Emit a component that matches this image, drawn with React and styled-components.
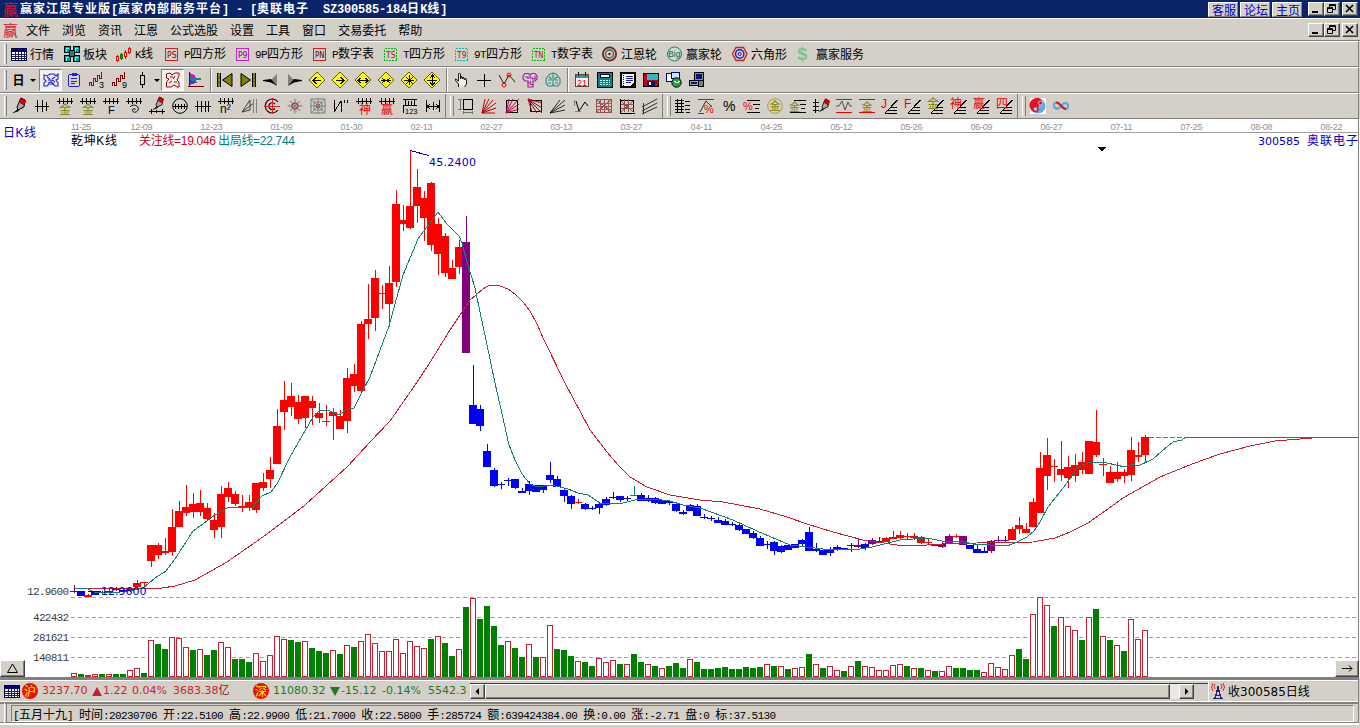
import React from "react";
import styled, { createGlobalStyle, css } from "styled-components";

const menus = ["文件", "浏览", "资讯", "江恩", "公式选股", "设置", "工具", "窗口", "交易委托", "帮助"];

// [icon, label, item width]
const mainTools = [
  ["sheet", "行情", 53],
  ["blocks", "板块", 52],
  ["kline", "K线", 49],
  ["ps", "P四方形", 71],
  ["p9", "9P四方形", 77],
  ["pn", "P数字表", 71],
  ["ts", "T四方形", 71],
  ["t9", "9T四方形", 77],
  ["tn", "T数字表", 70],
  ["wheel", "江恩轮", 65],
  ["big", "赢家轮", 65],
  ["hexagon", "六角形", 65],
  ["dollar", "赢家服务", 70],
];

const navTools = ["first", "last", "left", "right", "dLeft", "dRight", "dWide", "dShrink", "dCross", "dVert"];
const pointTools = ["hand", "plus", "angle", "brainPurple", "brainTeal"];
const utilTools = ["calendar", "calc", "book", "disk", "network", "computer"];

const drawTools = [
  "pencil", "comb3", "combGold", "combGold", "combF", "combSpiral", "pencilRuler", "circleRuler", "comb4",
  "combN2", "fanGrey", "target", "starTeal", "webTeal", "zig", "combShen", "combYing", "ruler123", "span",
];
const fanTools = ["square", "fanRed", "fanBox", "fanDown", "fan", "vee", "grid", "gridBlack", "channel"];
const levelTools = [
  "levels", "percentLine", "percent", "percentLevels", "goldCircle", "goldLevels", "penLevels", "wave",
  "goldLines", "fanJ", "fanF", "fanGold", "fanShen", "fanYing", "fanSi",
];

const dates = [
  "12-09", "12-23", "01-09", "01-30", "02-13", "02-27", "03-13", "03-27", "04-11", "04-25",
  "05-12", "05-26", "06-09", "06-27", "07-11", "07-25", "08-08", "08-22",
];

// colour, high, body top, body bottom, low
const candles = `
p 585 591 592 593|b 591 591 596 596|r 594 595 597 597|b 591 592 595 595|b 591 592 593 594|p 589 591 592 592|
p 587 589 590 591|b 588 590 592 592|p 587 589 591 592|r 580 583 587 588|r 582 582 583 586|r 545 545 561 567|
r 543 545 555 559|r 538 551 553 555|r 509 527 552 556|r 501 511 527 527|r 485 507 513 516|r 493 504 512 518|
r 490 503 512 516|r 503 508 519 521|r 513 520 530 538|r 486 494 527 538|r 482 488 497 502|r 491 494 504 506|
r 495 506 507 512|r 495 502 507 511|r 483 483 510 513|r 473 482 488 491|r 457 470 479 488|r 409 426 464 464|
r 381 400 412 430|r 383 396 407 416|r 395 402 419 424|r 396 396 418 428|r 396 401 408 425|r 403 413 418 423|
r 405 421 422 426|r 408 412 416 440|r 410 416 429 429|r 368 378 421 433|r 364 374 386 392|r 321 324 391 392|
r 284 319 324 339|r 270 278 318 331|r 285 293 294 309|r 266 283 304 327|r 190 204 282 287|r 205 220 224 231|
r 150 206 228 229|r 169 187 206 223|r 191 198 218 241|r 182 183 245 251|r 218 224 254 275|r 233 236 273 277|
r 260 268 279 279|r 240 247 267 274|p 216 242 353 353|b 365 405 424 424|b 405 409 426 431|b 444 451 467 467|
b 468 470 486 487|b 482 484 485 489|b 478 480 481 486|b 479 479 488 489|b 488 491 493 493|b 481 484 491 495|
b 485 485 492 492|b 485 485 490 493|b 462 475 480 483|b 476 479 487 487|b 489 490 496 502|b 495 496 504 509|
r 499 502 503 504|b 503 504 509 510|b 506 508 509 510|b 503 504 508 514|b 497 499 505 506|b 492 497 498 499|
b 496 496 500 502|b 496 498 499 501|t 486 495 496 496|b 493 495 501 501|b 495 498 501 502|b 497 498 503 504|
b 500 500 504 504|b 500 501 503 505|b 504 504 511 512|b 510 512 514 515|b 504 505 511 511|b 504 506 516 516|
b 514 517 518 519|b 516 518 519 521|b 517 520 523 523|b 519 521 525 525|b 522 524 525 526|b 524 525 530 531|
b 529 529 534 534|b 531 533 538 539|b 536 538 546 546|b 541 544 545 549|b 541 542 551 555|b 545 546 552 553|
b 545 545 550 550|b 544 544 548 548|b 539 540 544 547|b 527 532 551 551|b 543 549 551 552|b 550 550 555 555|
b 547 549 553 556|b 545 547 549 551|b 548 548 549 549|b 543 545 546 552|p 539 545 547 548|b 543 544 548 550|
p 538 540 544 545|p 537 541 543 543|r 537 538 542 542|r 531 537 539 539|r 531 535 538 539|r 533 536 537 540|
r 533 536 538 540|r 536 537 543 544|r 539 542 543 544|p 544 544 546 546|p 542 544 547 548|p 534 536 544 544|
r 534 536 537 538|p 536 536 545 545|b 545 545 549 549|b 545 549 553 553|b 547 551 553 553|p 540 541 551 553|
p 536 540 541 542|p 536 540 541 542|r 527 529 540 540|r 517 525 529 534|r 523 529 533 533|r 498 502 527 527|
r 452 468 513 513|r 438 455 476 490|r 459 466 467 482|r 441 469 475 481|r 456 467 478 488|r 454 465 476 482|
r 452 462 470 474|r 441 441 474 474|r 410 442 455 457|r 458 464 465 476|r 466 472 483 483|r 462 472 479 482|
r 469 472 476 483|r 437 450 475 481|r 442 455 457 462|r 435 437 455 462`
  .split("|")
  .map((row) => {
    const [c, ...v] = row.trim().split(" ");
    return [c, ...v.map(Number)];
  });

const candleColors = { r: "#ff0000", b: "#0000ff", p: "#800080", t: "#008080" };

// r = rising day, g = falling day, followed by the top of the bar
const volumes = `
r673 g674 r675 r674 g674 r674 g674 g674 r670 r668 g673 r640 g644 g649 r637 r638 r647 g650 r649 g655 g650 r642
r647 g659 g659 g662 r653 r661 r655 r636 r639 g640 g642 r641 g648 g651 g653 r650 g654 r645 g647 r641 r634 r643
r651 r651 r639 r653 r641 r646 r648 g639 r636 g643 g656 r649 g607 r598 g619 g606 g626 g645 r641 g648 g657 r644
g657 r657 r625 g649 g650 g656 r661 g662 g666 r658 r662 r660 g664 r664 g654 g662 r664 g666 r668 g666 g663 g668
r659 g662 g669 g669 g668 g667 g669 g669 g667 g668 g667 r664 g666 r666 g669 r668 r667 g654 r664 g668 r666 r670
g671 r666 g661 r666 r667 r670 r670 r665 r664 g666 r668 g668 r670 g671 r671 r666 g668 g668 g670 g670 r672 r663
r667 r669 r655 g649 g659 r614 r597 r605 g626 r617 r626 r630 g640 r617 g609 r636 g640 r645 g651 r619 r639 r630`
  .trim()
  .split(/\s+/);

const shortLine =
  "75,588 88,589 94,592 120,592 134,590 143,588 155,578 166,571 175,559 193,531 207,521 215,515 227,508 252,507 262,496 271,492 277,484 290,457 313,417 319,411 327,410 340,415 345,410 354,408 363,390 370,377 383,342 389,326 403,275 418,239 430,223 438,212 447,224 459,236 462,243 467,262 475,288 480,312 486,340 495,383 503,418 509,445 515,460 522,474 530,484 537,487 550,485 560,487 568,489 578,493 588,495 600,503 623,503 635,500 653,499 670,501 683,505 700,508 733,520 757,531 790,545 798,546 823,549 860,549 872,547 900,540 927,538 947,542 960,541 973,544 1007,546 1017,542 1027,537 1034,531 1040,522 1048,507 1067,483 1077,468 1090,462 1107,463 1125,467 1132,464 1138,466 1153,459 1162,451 1173,442 1182,440 1186,437 1358,437";
const longLine =
  "75,588 162,588 175,586 195,580 227,562 260,539 283,522 305,505 347,467 370,442 390,421 413,388 429,364 450,330 470,300 483,289 488,286 493,285 500,286 508,289 515,294 523,302 530,311 537,324 544,340 565,383 590,430 607,452 618,465 630,477 647,487 670,495 700,500 723,502 760,509 787,517 807,524 833,532 863,540 877,542 897,545 927,545 943,544 977,543 1033,542 1055,538 1070,532 1088,523 1105,511 1123,498 1160,477 1187,466 1203,460 1220,454 1250,446 1275,441 1300,439 1325,437";

const K = "#000";
const R = "#f00000";
const line = (d, stroke = K, extra = {}) => <path d={d} stroke={stroke} fill="none" {...extra} />;
const glyph = (t, x, y, fill, size = 9) => (
  <text x={x} y={y} fill={fill} fontSize={size} fontFamily='"Liberation Sans", "Noto Sans CJK SC", sans-serif'>{t}</text>
);
const soft = { shapeRendering: "auto" };

const badge = (t, box, ink, dash) => (
  <>
    <rect x="0.5" y="2.5" width="12" height="12" fill="none" stroke={box} strokeWidth="1.2" strokeDasharray={dash} />
    <text x="2" y="11.5" fill={ink} fontSize="8" textLength="9.5" lengthAdjust="spacingAndGlyphs" fontFamily='"DejaVu Sans", sans-serif'>{t}</text>
  </>
);
const comb = line("M0 3.5H16M2.5 0V6M6.5 0V6M10.5 0V6M14.5 0V6");
const fanLines = line("M3 15L15.5 2M3 15.5H15M5 12.5H15M8 9.5H15", K, { strokeWidth: 1 });
const diamond = (d) => (
  <>
    <path d="M8 0L16 8L8 16L0 8Z" fill="#ffff00" stroke="#606000" {...soft} />
    {line(d)}
  </>
);
const penHead = (
  <g {...soft}>
    <path d="M10 0L14 2L13 9L7 12L6 9Z" fill="#a8a8a8" stroke="#000" />
    <path d="M10 0L15 3L13 7L8 4Z" fill="#e00000" stroke="#600000" strokeWidth="0.6" />
    <path d="M1 15.5L7 11L8 13Z" fill="#000" />
  </g>
);
const fanGlyph = (t, color) => (
  <>
    {fanLines}
    {glyph(t, -1, 10, color, 12)}
  </>
);

const icons = {
  sheet: (
    <>
      <rect x="0.5" y="2.5" width="15" height="12" fill="#fff" stroke="#000040" />
      <rect x="1" y="3" width="14" height="3" fill="#000080" />
      {line("M1 8.5H15M1 10.5H15M1 12.5H15M4.5 6V14M7.5 6V14M10.5 6V14M13 6V14", "#202060")}
    </>
  ),
  blocks: (
    <>
      {[[1, 1], [10, 1], [1, 10], [10, 10]].map(([x, y]) => (
        <g key={x + "-" + y}>
          <rect x={x - 0.5} y={y - 0.5} width="6" height="6" fill="#00a0a0" stroke="#000" />
          {line(`M${x + 1} ${y + 1.5}H${x + 4}M${x + 1.5} ${y + 1}V${y + 5}`, "#40ffff")}
        </g>
      ))}
      <rect x="5.5" y="4.5" width="5" height="6" fill="#208080" stroke="#000" />
    </>
  ),
  kline: (
    <>
      {line("M1.5 9V16M5.5 7V14M9.5 4V13M13.5 1V8", R)}
      <path d="M0.5 10.5H2.5V14.5H0.5ZM8.5 6.5H10.5V10.5H8.5ZM12.5 2.5H14.5V6.5H12.5Z" fill="#fff" stroke={R} />
      <path d="M4.5 8.5H6.5V12.5H4.5Z" fill="#00a000" stroke="#008000" />
    </>
  ),
  ps: badge("PS", "#d02020", "#800000"),
  p9: badge("P9", "#d020d0", "#800080"),
  pn: badge("PN", "#d02020", "#500000"),
  ts: badge("TS", "#00c000", "#a02020", "2 1"),
  t9: badge("T9", "#00c0c0", "#a02020", "2 1"),
  tn: badge("TN", "#00c000", "#a02020", "2 1"),
  wheel: (
    <g fill="none" {...soft}>
      <circle cx="7.5" cy="8" r="6.6" stroke="#702020" strokeWidth="1.8" />
      <circle cx="7.5" cy="8" r="4" stroke="#207050" strokeWidth="1.4" />
      <circle cx="7.5" cy="8" r="1.3" fill="#702020" />
    </g>
  ),
  big: (
    <g {...soft}>
      <circle cx="7.5" cy="8" r="7" fill="#c0e0d0" stroke="#407060" />
      {glyph("Big", 1.2, 11, "#206050", 8.5)}
    </g>
  ),
  hexagon: (
    <g fill="none" {...soft}>
      <path d="M4 1.5H11.5L15 8L11.5 14.5H4L0.5 8Z" stroke="#c02020" strokeWidth="1.3" />
      <circle cx="7.7" cy="8" r="4.2" stroke="#2020c0" strokeWidth="1.4" />
      <circle cx="7.7" cy="8" r="1.5" stroke="#2020c0" />
    </g>
  ),
  dollar: (
    <g fontWeight="bold" {...soft}>
      {line("M5.5 0V16", "#90c090")}
      {glyph("S", 0, 14, "#80c090", 16)}
    </g>
  ),
  blueFace: (
    <g stroke="#2020e0" fill="none" strokeWidth="1.1" {...soft}>
      <path d="M1 3L4 4L7 2H11L13 4L15 2V7L13 8L15 11V14H12L10 12H6L4 14H1V11L3 9L1 7ZM4 5L7 7M12 5L9 7M5 8H8V10M9 8L12 10M5 11L8 10L11 12" />
    </g>
  ),
  clipboard: (
    <g stroke="#2020e0" fill="none">
      <rect x="2.5" y="2.5" width="11" height="12" rx="2" />
      <path d="M6 2.5V1.5H10.500V3.500H6M5 6.5H11M5 9.5H11M5 11.5H9" />
    </g>
  ),
  wave3: (
    <>
      {line("M0.5 14V10H2.5V13H4.5V6H6.5V9H8.5V3H10.5V6H12.5V0", "#800080")}
      {glyph("3", 10, 16, K, 9)}
    </>
  ),
  wave9: (
    <>
      {line("M0.5 14V10H2.5V13H4.5V6H6.5V9H8.5V3H10.5V6H12.5V0", "#800000")}
      {glyph("9", 10, 16, K, 9)}
    </>
  ),
  bar: line("M7.5 0V3M5.5 3.5H9.5V12.5H5.5ZM7.5 13V16"),
  redFace: line("M1.5 2V6L4 7L1.5 10V15H6L9 13L12 15H14V10L12 8L14 4V1H10L7 3L5 1ZM5 5H8M10 4L8 7M9 10H12M4 11L7 9", "#a00000", soft),
  flag: (
    <>
      <path d="M2 1L8 4L2 7Z" fill="#e000e0" />
      <path d="M2 4L15 7L2 10Z" fill="#208080" />
      <path d="M2 8L10 10L2 13Z" fill="#4040c0" />
      {line("M1.5 0V15M0 14.5H16", "#800000")}
    </>
  ),
  first: (
    <>
      {line("M0.5 1V15M3.5 1V15")}
      {line("M2 1V15", "#808000", { strokeWidth: 2 })}
      <path d="M15 1.5V14.5L5.5 8Z" fill="#808000" stroke="#000" {...soft} />
    </>
  ),
  last: (
    <>
      {line("M12.5 1V15M15.5 1V15")}
      {line("M14 1V15", "#808000", { strokeWidth: 2 })}
      <path d="M1 1.5V14.5L10.5 8Z" fill="#808000" stroke="#000" {...soft} />
    </>
  ),
  left: (
    <g {...soft}>
      <path d="M14 2V14L8 8Z" fill="#808080" />
      <path d="M0 8L8 7L14 14L8 10.500L0 9Z" />
    </g>
  ),
  right: (
    <g {...soft}>
      <path d="M2 2V14L8 8Z" fill="#808080" />
      <path d="M16 8L8 7L2 14L8 10.500L16 9Z" />
    </g>
  ),
  dLeft: diamond("M4 8.5H12M7.500 5L4 8.5L7.500 12"),
  dRight: diamond("M4 8.5H12M8.500 5L12 8.5L8.500 12"),
  dWide: diamond("M3 8.5H13M5.500 6L3 8.5L5.500 11M10.500 6L13 8.5L10.500 11"),
  dShrink: diamond("M3 8.5H13M4 6L7 8.5L4 11M12 6L9 8.5L12 11"),
  dCross: diamond("M3 8.5H13M8.5 3V13M5 5L12 12M12 5L5 12"),
  dVert: diamond("M3 8.5H13M8.5 3V13M6 6L8.5 3L11 6M6 10.500L8.5 13L11 10.500"),
  hand: <path d="M5.5 15V12L2.5 8.5V7L5.5 9V2L6.5 1L7.5 2V7L8.5 4L9.5 7L10.5 5L11.5 8L12.5 6L13.5 8V12L11.5 15" fill="#f0f0f0" stroke="#000" strokeWidth="0.9" {...soft} />,
  plus: line("M1 8.5H15M8.5 2V15"),
  angle: (
    <g {...soft}>
      {line("M0 3L5 12L10 3L16 10", "#202020")}
      <circle cx="5" cy="13" r="2" fill="none" stroke={R} />
      <circle cx="10" cy="3" r="2" fill="none" stroke={R} />
    </g>
  ),
  brainPurple: (
    <g stroke="#a020a0" fill="none" strokeWidth="1.2" {...soft}>
      <path d="M3 1.500H6L8 2.500L10 1.500H13L15 4V7L13 9H11V15H6V9H3L1 7V4ZM3 5H6V7M8 2.500V6H11M13 4V7H10M6 11H8.500V9M8 12.500H11" />
    </g>
  ),
  brainTeal: (
    <g stroke="#209090" fill="none" strokeWidth="1.1" {...soft}>
      <path d="M5 2L8 1L11 2L13 4L15 7V11L13 14H9L8 12L7 14H3L1 11V7L3 4ZM8 1V12M4 5L6 6V8H3M3 11H6M13 5L10 6V8H13M10 11H13" />
    </g>
  ),
  calendar: (
    <>
      <rect x="1.5" y="2.5" width="13" height="12" fill="#fff0f0" stroke="#604040" />
      <rect x="2" y="3" width="12" height="3" fill="#20a0a0" />
      {line("M4.5 0V4M11.5 0V4")}
      {glyph("21", 3, 14, "#e00000", 9)}
    </>
  ),
  calc: (
    <>
      <rect x="0.5" y="0.5" width="15" height="15" fill="#108080" stroke="#000" />
      <rect x="3.5" y="2.5" width="9" height="3" fill="#fff" stroke="#000040" />
      {line("M3 8.5H13M3 10.5H13M3 12.5H13", "#c0ffff", { strokeDasharray: "2 1" })}
    </>
  ),
  book: (
    <>
      <rect x="1" y="1" width="14" height="14" fill="#fff" stroke="#000" strokeWidth="1.4" />
      {line("M3.5 1V15", K, { strokeDasharray: "1 1" })}
      {line("M6 4.5H13M6 6.5H13M6 8.5H13M6 10.5H11", "#2020c0")}
      <path d="M15 9V15H9Z" />
    </>
  ),
  disk: (
    <>
      <rect x="0.5" y="1.5" width="15" height="13" fill="#c00020" stroke="#000" />
      <rect x="4" y="2" width="11" height="6" fill="#20c0c0" />
      <path d="M4 9H12V14H4Z" fill="#101060" />
      <path d="M6 10H8V13H6Z" fill="#fff" />
    </>
  ),
  network: (
    <g>
      <rect x="0.5" y="1.5" width="8" height="8" fill="#fff" stroke="#000080" />
      <rect x="5.5" y="0.5" width="8" height="6" fill="#d0e0ff" stroke="#000080" />
      <circle cx="10.5" cy="10.5" r="4.7" fill="#20a060" stroke="#000" {...soft} />
      {line("M8 9L11 11L14 9", "#ffff60")}
    </g>
  ),
  computer: (
    <>
      <rect x="5.5" y="0.5" width="9" height="8" fill="#909090" stroke="#000" />
      <rect x="7" y="2" width="6" height="5" fill="#101080" />
      <rect x="0.5" y="8.5" width="9" height="5" fill="#a0a0c0" stroke="#000" />
      <rect x="9.5" y="8.5" width="5" height="6" fill="#808080" stroke="#000" />
      <path d="M2 10H8V12H2Z" fill="#101080" />
    </>
  ),
  pencil: penHead,
  comb3: line("M1 8.5H15M3.5 2V14M8.5 2V14M12.5 4V13"),
  combGold: <>{comb}{glyph("金", 2, 16, "#808000", 12)}</>,
  combF: <>{comb}{glyph("F", 5, 15.5, K, 11)}</>,
  combSpiral: <>{comb}{line("M4 9C7 5 14 8 12 12C10 16 5 14 7 11C8 10 10 11 9 12", K, soft)}</>,
  pencilRuler: <>{<g transform="translate(2 -1) scale(.85)">{penHead}</g>}{line("M0 13.5H16M2.5 11V16M13.5 11V16M7.5 12V15")}</>,
  circleRuler: (
    <>
      <circle cx="8" cy="8" r="7.3" fill="none" stroke="#000" {...soft} />
      {line("M1 8.5H15M3.5 6V11M6.5 6V11M9.5 6V11M12.5 6V11")}
    </>
  ),
  comb4: line("M0 8.5H16M2.5 3V14M6.5 3V14M10.5 3V14M13.5 3V14"),
  combN2: <>{comb}{glyph("n²", 2, 15, K, 12)}</>,
  fanGrey: <>{line("M1 14L9 2V12ZM1 14L13 5", "#404040", soft)}{line("M12.5 1V15M15.5 1V15", "#808080")}</>,
  target: (
    <>
      <path d="M14 4A7 7 0 1 0 14 12M11 6A3.500 3.500 0 1 0 11 10.500" fill="none" stroke="#400000" strokeWidth="1.2" {...soft} />
      {line("M8.5 0V16M0 8.5H16", "#e02020")}
    </>
  ),
  starTeal: (
    <g {...soft}>
      {line("M8 0.500V15.500M0.500 8H15.500M3 3L13 13M13 3L3 13", "#609090")}
      <circle cx="8" cy="8" r="3" fill="none" stroke="#c04040" strokeWidth="1.4" />
      <circle cx="8" cy="8" r="5.5" fill="none" stroke="#709090" strokeDasharray="1 2" />
    </g>
  ),
  webTeal: (
    <g {...soft}>
      <path d="M1 1H15V15H1ZM4 4H12V12H4Z" fill="none" stroke="#708080" />
      {line("M8 0V16M0 8H16M1 1L15 15M15 1L1 15", "#708080", { strokeWidth: 0.8 })}
      <circle cx="8" cy="8" r="2" fill="none" stroke="#b04040" />
    </g>
  ),
  zig: line("M1.5 2V14M1 14L8 3M8.5 3V14M11.5 2V5M14.5 2V5"),
  combShen: <>{comb}{glyph("神", 3, 16, R, 12)}</>,
  combYing: <>{comb}{glyph("赢", 2, 16, R, 12)}</>,
  ruler123: <>{line("M1 1.5H15M1 7.5H15M3.5 1V8M6.5 3V7M9.5 3V7M12.5 1V8M1.5 8V15")}{glyph("123", 3, 15.5, K, 7.5)}</>,
  span: line("M1.5 2V14M14.5 2V14M1 8.5H15M5 6L2 8.5L5 11M11 6L14 8.5L11 11M8.5 4V12"),
  square: <>{line("M5.5 1.5H14.5V11.5H5.5Z")}{line("M0 1.5H4M2.5 2V12M0 11.5H4M5.5 13V16M14.5 13V16M6 14.500H14", "#707070")}</>,
  fanRed: line("M1 15L4 1M1 15L8 1M1 15L12 2M1 15L15 5M1 15L15 10M1 15H14", "#c00000", soft),
  fanBox: <><rect x="2.5" y="2.5" width="11" height="12" fill="none" stroke="#000" />{line("M2 15L5 1M2 15L9 1M2 15L15 1M2 15L15 6M2 15L15 11", "#b00050", soft)}</>,
  fanDown: <><rect x="3.5" y="2.5" width="11" height="11" fill="none" stroke="#000" />{line("M1 1L15 5M1 1L15 10M1 1L15 15M1 1L10 15M1 1L5 14", "#b00020", soft)}</>,
  fan: line("M0 15L15 2M0 15L15 7M0 15L15 12M0 15L10 2", K, { ...soft, strokeWidth: 0.8 }),
  vee: <>{line("M3 3L6 13L12 4L15 8", K, soft)}{line("M1.5 2V8M2 13.5H8", "#808080")}</>,
  grid: <>{line("M0.5 1.5H15.5V14.5H0.5ZM0 8.5H16M8.5 1V15M1 2L15 14M15 2L1 14", "#905050")}{line("M4.5 1V15M12.5 1V15M0 5.5H16M0 11.5H16", "#a06060")}</>,
  gridBlack: <>{line("M1.5 1V15H16M2 2.5H15M14.5 2V14")}{line("M5.5 1V14M9.5 1V14M2 6.5H15M2 10.5H15M2 3L14 14M14 3L2 14", "#905050")}</>,
  channel: line("M0 9L15 1M0 13L15 5M0 16L15 9M1.5 5V16", "#303030", soft),
  levels: line("M2.5 1V15M6.5 1V15M0 2.5H9M0 5.5H9M0 8.5H9M0 11.5H9M0 14.5H9M10 3.5H15M10 7.5H15M10 11.5H15M11 14.5H15"),
  percentLine: <>{line("M0 1.5H16M0 15.5H6", R)}{line("M2 14L8 3L14 9", "#303030", soft)}{glyph("%", 6, 15, R, 11)}</>,
  percent: glyph("%", 2, 13, K, 14),
  percentLevels: <>{line("M3 2.5H16M9 6.5H16M11 10.5H15M3 14.5H16")}{glyph("%", -1, 12, R, 11)}</>,
  goldCircle: <g {...soft}><circle cx="8" cy="8" r="7.3" fill="none" stroke="#a0a040" />{glyph("金", 2.5, 12, "#808000", 11)}</g>,
  goldLevels: <>{line("M4 2.5H16M10 6.5H16M11 10.5H15M0 14.5H16")}{glyph("金", -1, 13, "#808000", 11)}</>,
  penLevels: <>{line("M2.5 1V15M0 4.5H6M0 8.5H6M0 12.5H6")}<g transform="translate(4 1) scale(.85)">{penHead}</g></>,
  wave: <>{line("M0 1.5H16M0 14.5H16", R)}{line("M0 8H3L6 3L9 12L12 4L14 8H16", "#505050", soft)}</>,
  goldLines: <>{line("M0 1.5H16M0 14.5H16", R)}{glyph("金", 2.5, 12.500, "#808000", 11)}</>,
  fanJ: fanGlyph("J", R),
  fanF: fanGlyph("F", R),
  fanGold: fanGlyph("金", "#808000"),
  fanShen: fanGlyph("神", R),
  fanYing: fanGlyph("赢", R),
  fanSi: fanGlyph("四", R),
  taiji: (
    <g {...soft}>
      <rect width="16" height="16" fill="#fff" />
      <circle cx="8" cy="8" r="7.5" fill="#60a8f0" />
      <path d="M10.500 0.700A7.500 7.500 0 1 0 3.500 14C5 15 10 14 8.500 10C7 7 12 6 12 3Z" fill="#e81020" />
      <circle cx="10.5" cy="5" r="2" fill="#e81020" stroke="#c0d8f8" strokeWidth="0.8" />
      <circle cx="5.5" cy="11" r="1.8" fill="#a0c8f8" />
    </g>
  ),
  infinity: (
    <g fill="none" strokeWidth="2.2" {...soft}>
      <path d="M8 8C4 2 0 5 1 8C2 12 6 11 8 8C12 3 15 5 15 8C15 12 11 12 8 8" stroke="#60a8d8" />
      <path d="M3 4.5C7 4 8 10 13 11.2" stroke="#d01030" />
    </g>
  ),
  tower: (
    <>
      <path d="M5 15.5L8 4L11 15.5M3 15.5H13M6 12.5H10M7 8.5H9" fill="none" stroke="#202080" strokeWidth="1.5" />
      <path d="M5 1Q3 3.5 5 6M11 1Q13 3.5 11 6M3 0Q0 4 3 8M13 0Q16 4 13 8" fill="none" stroke="#e02020" {...soft} />
    </>
  ),
};

function Icon({ name }) {
  return <IconSvg viewBox="0 0 16 16">{icons[name]}</IconSvg>;
}

// latin runs are half the width of a chinese character
function Mixed({ children }) {
  return children.split(/([\x20-\x7e]+)/).map((run, i) => (i % 2 ? <Latin key={i}>{run}</Latin> : run));
}

function IconCells({ names }) {
  return names.map((name, i) => (
    <Cell key={i}>
      <Icon name={name} />
    </Cell>
  ));
}

function WindowButtons() {
  return (
    <WindowBtnGroup>
      <WindowBtn><svg width="11" height="10"><path d="M2 8H8" stroke="#000" strokeWidth="2" /></svg></WindowBtn>
      <WindowBtn><svg width="11" height="10"><path d="M3.5 3V0.5H9.5V5.5H7M1.5 3.5H6.5V8.5H1.5ZM3 1.5H10M1 4.5H7" fill="none" stroke="#000" /></svg></WindowBtn>
      <WindowBtn $gap><svg width="11" height="10"><path d="M2 1L9 8M9 1L2 8" stroke="#000" strokeWidth="1.7" /></svg></WindowBtn>
    </WindowBtnGroup>
  );
}

function Chart() {
  return (
    <ChartSvg viewBox="0 119 1360 558">
      <path d="M71 132.5H1358" stroke="#a0a0a0" />
      <g fill="#909090" fontSize="9" fontFamily='"Liberation Sans", sans-serif'>
        <text x="71" y="130" textLength="20">11-25</text>
        {dates.map((d, i) => (
          <text key={d} x={130.5 + i * 70} y="130" textLength="22">{d}</text>
        ))}
      </g>
      <ChartText x="3" y="137" fill="#0000c8" textLength="33">日K线</ChartText>
      <ChartText x="71" y="145" fill="#000" textLength="46">乾坤K线</ChartText>
      <ChartText x="139" y="145" fill="#d00020" textLength="77">关注线=19.046</ChartText>
      <ChartText x="218" y="145" fill="#008080" textLength="77">出局线=22.744</ChartText>
      <ChartText x="1307" y="145" fill="#0000c8" textLength="51">奥联电子</ChartText>
      <WideText x="1258" y="145" fill="#0000c8">300585</WideText>
      <path d="M1098 147H1106L1102 151.5Z" />

      <g fill="#404040" fontSize="11" fontFamily='"Liberation Mono", monospace'>
        <text x="27" y="595" textLength="42">12.9600</text>
        <text x="33" y="621" textLength="36">422432</text>
        <text x="33" y="641" textLength="36">281621</text>
        <text x="33" y="661" textLength="36">140811</text>
      </g>
      <path d="M71 597.5H1358M71 617.5H1358M71 637.5H1358M71 657.5H1358" stroke="#a0a0a0" strokeDasharray="4 3" />

      {volumes.map((v, i) => {
        const top = Number(v.slice(1));
        return v[0] === "r" ? (
          <rect key={i} x={71.5 + i * 7} y={top + 0.5} width="5" height={676 - top} fill="#fff" stroke="#c81e32" />
        ) : (
          <rect key={i} x={71 + i * 7} y={top} width="6" height={677 - top} fill="#008000" />
        );
      })}

      {candles.map(([c, high, top, bottom, low], i) => (
        <g key={i} fill={candleColors[c]}>
          <rect x={74 + i * 7} y={high} width="1" height={low - high} />
          <rect x={70 + i * 7} y={top} width="8" height={bottom - top} />
        </g>
      ))}

      <polyline points={longLine} fill="none" stroke="#c81e32" />
      <polyline points={shortLine} fill="none" stroke="#108078" />
      <path d="M1149 437.5H1186" stroke="#a06070" strokeDasharray="5 2" />
      <path d="M410 150.5L429 155.5" stroke="#0000c8" />
      <WideText x="429" y="166" fill="#0000c8" textLength="47">45.2400</WideText>
      <path d="M88 591.5H101" stroke="#0000c8" />
      <WideText x="101" y="595" fill="#0000c8">12.9600</WideText>
      <path d="M1358.5 119V677" stroke="#808080" />
    </ChartSvg>
  );
}

function App() {
  return (
    <Window>
      <GlobalStyle />
      <TitleBar>
        <Logo>赢</Logo>
        <Title><Mixed>赢家江恩专业版[赢家内部服务平台] - [奥联电子  SZ300585-184日K线]</Mixed></Title>
        <TitleLink>客服</TitleLink>
        <TitleLink>论坛</TitleLink>
        <TitleLink>主页</TitleLink>
        <WindowButtons />
      </TitleBar>

      <MenuBar>
        <Logo>赢</Logo>
        <MenuList>
          {menus.map((m) => <span key={m}>{m}</span>)}
        </MenuList>
        <WindowButtons />
      </MenuBar>

      <Toolbar>
        <Grip $wide />
        {mainTools.map(([icon, label, width]) => (
          <Tool key={label} $width={width}>
            <Icon name={icon} />
            <ToolLabel><Mixed>{label}</Mixed></ToolLabel>
          </Tool>
        ))}
      </Toolbar>

      <Toolbar>
        <Grip />
        <Cell><PeriodLabel>日</PeriodLabel></Cell>
        <DropCell $width={9}><Caret /></DropCell>
        <Cell $pressed><Icon name="blueFace" /></Cell>
        <IconCells names={["clipboard", "wave3", "wave9", "bar"]} />
        <DropCell $width={7}><Caret /></DropCell>
        <Cell $pressed><Icon name="redFace" /></Cell>
        <Cell><Icon name="flag" /></Cell>
        <Separator />
        <IconCells names={navTools} />
        <Separator />
        <IconCells names={pointTools} />
        <Separator />
        <IconCells names={utilTools} />
      </Toolbar>

      <Toolbar>
        <Grip />
        <IconCells names={drawTools} />
        <Divider />
        <IconCells names={fanTools} />
        <Divider />
        <IconCells names={levelTools} />
        <Divider />
        <IconCells names={["taiji", "infinity"]} />
      </Toolbar>

      <ChartArea>
        <Chart />
        <CornerBtn $side="left"><svg width="13" height="11"><path d="M6.5 1L11.5 9.5H1.5Z" fill="none" stroke="#000" /></svg></CornerBtn>
        <CornerBtn $side="right"><svg width="13" height="11"><path d="M1 5.5H11M8 2.5L11 5.5L8 8.5" fill="none" stroke="#000" /></svg></CornerBtn>
      </ChartArea>

      <QuoteBar>
        <Quotes>
          <Icon name="sheet" />
          <Market>沪</Market>
          <Quote $color="#c81e32" $width={50}>3237.70</Quote>
          <Arrow $up />
          <Quote $color="#c81e32" $width={29}>1.22</Quote>
          <Quote $color="#c81e32" $width={41}>0.04%</Quote>
          <Quote $color="#c81e32" $width={78}>3683.38<Unit>亿</Unit></Quote>
          <Market>深</Market>
          <Quote $color="#1e7828" $width={57}>11080.32</Quote>
          <Arrow />
          <Quote $color="#1e7828" $width={41}>-15.12</Quote>
          <Quote $color="#1e7828" $width={46}>-0.14%</Quote>
          <Quote $color="#1e7828" $width={40}>5542.3</Quote>
        </Quotes>
        <ScrollBar>
          <ScrollBtn><svg width="5" height="7"><path d="M4 0V7L0.5 3.5Z" /></svg></ScrollBtn>
          <Thumb />
          <Track />
          <ScrollBtn><svg width="5" height="7"><path d="M1 0V7L4.5 3.5Z" /></svg></ScrollBtn>
        </ScrollBar>
        <Feed>
          <Icon name="tower" />
          <span>收<FeedCode>300585</FeedCode>日线</span>
        </Feed>
      </QuoteBar>

      <StatusBar>
        <Grip />
        <StatusText>
          <Mixed>[五月十九] 时间:20230706 开:22.5100 高:22.9900 低:21.7000 收:22.5800 手:285724 额:639424384.00 换:0.00 涨:-2.71 盘:0 标:37.5130</Mixed>
        </StatusText>
      </StatusBar>
    </Window>
  );
}

const GlobalStyle = createGlobalStyle`
  * {
    box-sizing: border-box;
  }
  body {
    margin: 0;
    overflow: hidden;
    background: #d4d0c8;
  }
`;

const raised = css`
  background: #d4d0c8;
  border: 1px solid;
  border-color: #fff #404040 #404040 #fff;
  box-shadow: inset -1px -1px 0 #808080;
`;

const Window = styled.div`
  display: flex;
  flex-direction: column;
  width: 1360px;
  height: 728px;
  background: #d4d0c8;
  color: #000;
  font-family: "Noto Sans CJK SC", sans-serif;
  font-size: 12px;
  line-height: 14px;
  white-space: pre;
`;

const Latin = styled.span`
  font-family: "Liberation Mono", monospace;
  font-size: 11px;
  letter-spacing: -0.6px;
`;

const TitleBar = styled.div`
  display: flex;
  align-items: center;
  height: 18px;
  padding: 0 2px 0 3px;
  background: #0a246a;
`;

const Logo = styled.span`
  width: 17px;
  color: #e01030;
  font-size: 15px;
  line-height: 16px;
`;

const Title = styled.div`
  flex: 1;
  color: #fff;
  font-weight: bold;
  letter-spacing: 1px;

  ${Latin} {
    font-size: 12px;
    letter-spacing: -0.2px;
  }
`;

const TitleLink = styled.div`
  width: 30px;
  height: 15px;
  margin-right: 2px;
  padding-left: 3px;
  background: #d4d0c8;
  border: 1px solid;
  border-color: #fff #808080 #808080 #fff;
  color: #0000d0;
  line-height: 13px;
`;

const WindowBtnGroup = styled.div`
  display: flex;
  margin-left: 4px;
`;

const WindowBtn = styled.button`
  ${raised}
  display: flex;
  width: 16px;
  height: 14px;
  margin-left: ${(p) => (p.$gap ? "2px" : 0)};
  padding: 1px;
`;

const MenuBar = styled.div`
  display: flex;
  align-items: center;
  height: 23px;
  padding: 0 2px 0 3px;
  border-top: 1px solid #fff;
  border-bottom: 1px solid #808080;
`;

const MenuList = styled.div`
  display: flex;
  flex: 1;
  gap: 12px;
  padding-left: 6px;
`;

const Toolbar = styled.div`
  display: flex;
  align-items: center;
  height: 26px;
  margin-right: 1px;
  border-top: 1px solid #fff;
  border-bottom: 1px solid #808080;
  border-right: 1px solid #808080;
`;

const Grip = styled.div`
  flex: none;
  width: 3px;
  height: 20px;
  margin: 0 ${(p) => (p.$wide ? 4 : 0)}px 0 4px;
  border-left: 1px solid #fff;
  border-right: 1px solid #808080;
`;

const IconSvg = styled.svg`
  flex: none;
  width: 16px;
  height: 16px;
  overflow: visible;
  shape-rendering: crispEdges;
`;

const Tool = styled.div`
  display: flex;
  align-items: center;
  gap: 3px;
  width: ${(p) => p.$width}px;
`;

const ToolLabel = styled.span`
  line-height: 16px;
`;

const Cell = styled.div`
  display: flex;
  align-items: center;
  justify-content: center;
  flex: none;
  width: 23px;
  height: 22px;
  ${(p) =>
    p.$pressed &&
    css`
      background: #f2f0ed;
      border: 1px solid;
      border-color: #808080 #fff #fff #808080;
    `}
`;

const PeriodLabel = styled.span`
  font-weight: bold;
`;

const DropCell = styled.div`
  display: flex;
  width: ${(p) => p.$width}px;
`;

const Caret = styled.i`
  border: 3px solid transparent;
  border-top-color: #000;
  border-bottom: 0;
`;

const Separator = styled.div`
  width: 2px;
  height: 24px;
  margin: 0 1px 0 3px;
  border-left: 1px solid #808080;
  border-right: 1px solid #fff;
`;

const Divider = styled.div`
  display: flex;
  width: 9px;
  height: 25px;
  margin-left: 1px;
  align-items: center;
  border-left: 1px solid #808080;

  &::after {
    content: "";
    width: 3px;
    height: 20px;
    margin-left: 4px;
    border-left: 1px solid #fff;
    border-right: 1px solid #808080;
  }
`;

const ChartArea = styled.div`
  position: relative;
  height: 558px;
  background: #fff;
`;

const ChartSvg = styled.svg`
  display: block;
  width: 1360px;
  height: 558px;
  shape-rendering: crispEdges;
`;

const ChartText = styled.text`
  font-family: "Liberation Sans", "Noto Sans CJK SC", sans-serif;
  font-size: 12px;
`;

const WideText = styled.text`
  font-family: "DejaVu Sans", sans-serif;
  font-size: 11px;
`;

const CornerBtn = styled.button`
  ${raised}
  position: absolute;
  bottom: 0;
  ${(p) => (p.$side === "left" ? "left: 0;" : "right: 1px;")}
  display: flex;
  align-items: center;
  justify-content: center;
  width: ${(p) => (p.$side === "left" ? 25 : 24)}px;
  height: 17px;
  padding: 0;
`;

const QuoteBar = styled.div`
  display: flex;
  height: 25px;
  margin-right: 1px;
  border-top: 3px solid #808080;
  box-shadow: inset 0 1px 0 #fff, inset 0 -1px 0 #fff;
`;

const Quotes = styled.div`
  display: flex;
  align-items: center;
  width: 470px;
  padding-left: 4px;
  overflow: hidden;
`;

const Market = styled.span`
  flex: none;
  width: 16px;
  height: 16px;
  margin: 0 4px 0 2px;
  border-radius: 50%;
  background: #f01000;
  color: #ffff00;
  font-size: 12px;
  line-height: 15px;
  text-align: center;
`;

const Quote = styled.span`
  flex: none;
  width: ${(p) => p.$width}px;
  color: ${(p) => p.$color};
  font-family: "DejaVu Sans", sans-serif;
  font-size: 11px;
  line-height: 14px;
`;

const Unit = styled.span`
  color: #801020;
  font-family: "Noto Sans CJK SC", sans-serif;
  line-height: 1;
`;

const Arrow = styled.i`
  flex: none;
  margin-right: 1px;
  border: 5.5px solid transparent;
  ${(p) =>
    p.$up
      ? "border-bottom: 9px solid #c81e32; border-top: 0;"
      : "border-top: 9px solid #1e7828; border-bottom: 0;"}
`;

const ScrollBar = styled.div`
  display: flex;
  width: 738px;
  height: 16px;
  margin-top: 3px;
  padding-right: 14px;
  border-top: 1px solid #404040;
`;

const ScrollBtn = styled.button`
  ${raised}
  display: flex;
  align-items: center;
  justify-content: center;
  flex: none;
  width: 15px;
  padding: 0;
`;

const Thumb = styled.div`
  ${raised}
  flex: 1;
`;

const Track = styled.div`
  width: 9px;
  background: #ebe9e5;
`;

const Feed = styled.div`
  display: flex;
  align-items: center;
  flex: 1;
  gap: 2px;
  padding-left: 1px;
  border-left: 1px solid #fff;
  border-right: 1px solid #808080;
`;

const FeedCode = styled.span`
  font-family: "DejaVu Sans", sans-serif;
  font-size: 12px;
`;

const StatusBar = styled.div`
  display: flex;
  align-items: center;
  height: 21px;
  margin-right: 1px;
  border-top: 2px solid #808080;
  border-bottom: 1px solid #808080;
  border-right: 1px solid #808080;
  box-shadow: 0 2px 0 #fff;
`;

const StatusText = styled.div`
  flex: 1;
  height: 17px;
  margin: 0 4px;
  padding: 1px 0 0 1px;
  border: 1px solid;
  border-color: #808080 #fff #fff #808080;
`;

export default App;
